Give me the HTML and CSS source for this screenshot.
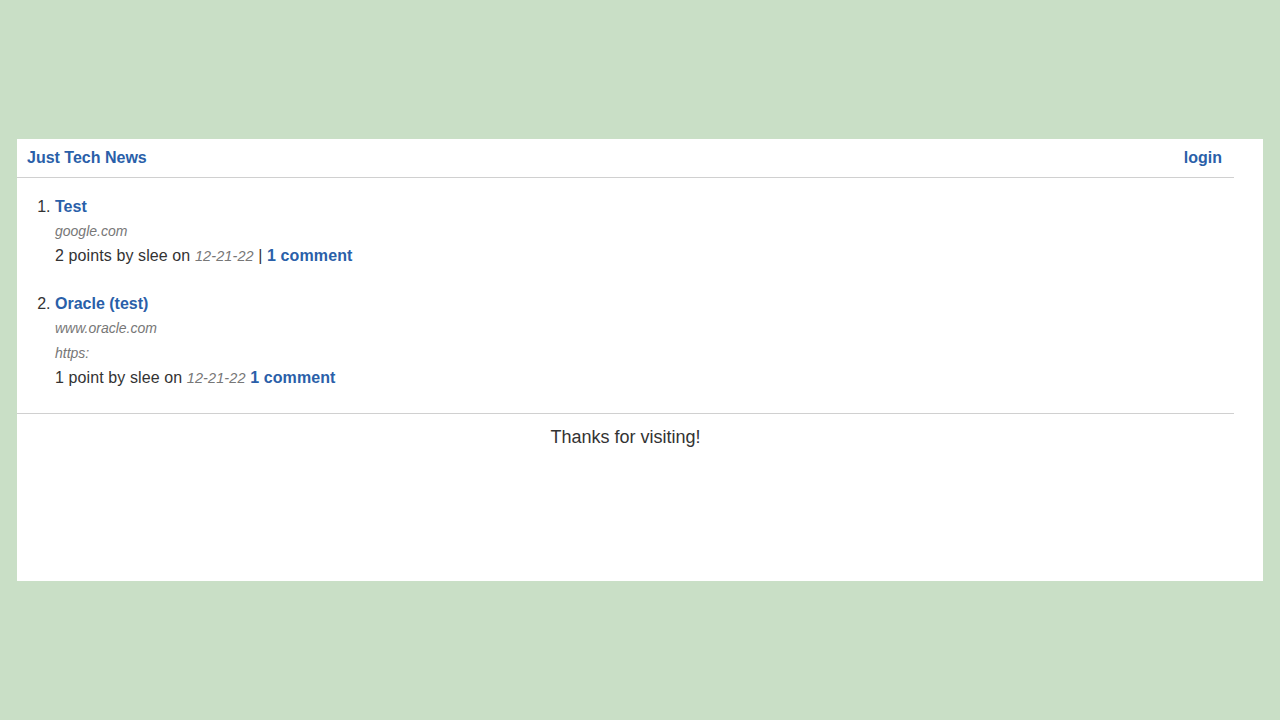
FILE: index.html
```html
<!DOCTYPE html>
<html>
<head>
<meta charset="utf-8">
<link rel="stylesheet" href="styles.css">
<title>Just Tech News</title>
</head>
<body>
<div class="panel">
  <div class="inner">
    <header class="topbar">
      <a class="brand" href="#">Just Tech News</a>
      <a class="nav-link" href="#">login</a>
    </header>
    <main class="content">
      <ol class="posts">
        <li class="post">
          <a class="post-title" href="#">Test</a>
          <div class="domain">google.com</div>
          <div class="meta">2 points by slee on <span class="date">12-21-22</span> | <a class="comments" href="#">1 comment</a></div>
        </li>
        <li class="post">
          <a class="post-title" href="#">Oracle (test)</a>
          <div class="domain">www.oracle.com</div>
          <div class="domain">https:</div>
          <div class="meta">1 point by slee on <span class="date">12-21-22</span> <a class="comments" href="#">1 comment</a></div>
        </li>
      </ol>
    </main>
    <footer class="footer">Thanks for visiting!</footer>
  </div>
</div>
</body>
</html>
```
FILE: styles.css
```css
html, body {
  margin: 0;
  padding: 0;
}
body {
  background: #c9dfc6;
  font-family: "Liberation Sans", Arial, sans-serif;
  color: #333;
}
.panel {
  margin: 139px 0 0 17px;
  width: 1246px;
  height: 442px;
  background: #fff;
}
.inner {
  width: 1217px;
}
a {
  color: #2a5fa9;
  text-decoration: none;
  font-weight: bold;
}
.topbar {
  display: flex;
  justify-content: space-between;
  align-items: center;
  height: 38px;
  padding: 0 12px 0 10px;
  border-bottom: 1px solid #d0d0d0;
  font-size: 16px;
}
.content {
  padding: 17px 0 23px;
  border-bottom: 1px solid #d0d0d0;
}
.posts {
  margin: 0;
  padding-left: 38px;
  font-size: 16px;
  line-height: 24px;
}
.post + .post {
  margin-top: 24px;
}
.post-title {
  display: block;
}
.domain {
  font-size: 14px;
  line-height: 25px;
  font-style: italic;
  color: #777;
}
.meta {
  letter-spacing: 0.1px;
}
.date {
  font-size: 14.5px;
  font-style: italic;
  color: #777;
}
.footer {
  text-align: center;
  font-size: 18px;
  line-height: 24px;
  padding-top: 11px;
}
```
